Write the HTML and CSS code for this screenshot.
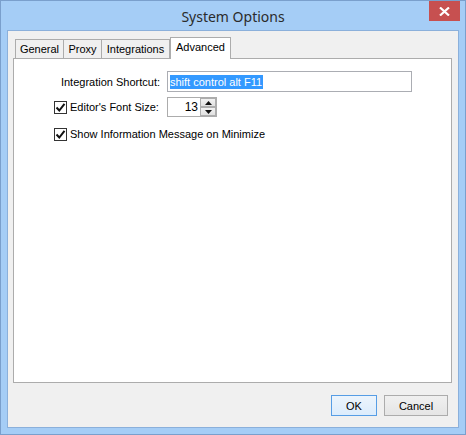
FILE: index.html
```html
<!DOCTYPE html>
<html>
<head>
<meta charset="utf-8">
<link rel="stylesheet" href="styles.css">
</head>
<body>
<div class="window">
  <div class="titlebar">
    <span class="title">System Options</span>
    <div class="close">
      <svg width="11" height="9" viewBox="0 0 11 9"><path d="M1 0.5 L10 8.5 M10 0.5 L1 8.5" stroke="#fff" stroke-width="2.2" fill="none"/></svg>
    </div>
  </div>
  <div class="client">
    <div class="tabs">
      <div class="tab t-general">General</div>
      <div class="tab t-proxy">Proxy</div>
      <div class="tab t-integ">Integrations</div>
      <div class="tab active">Advanced</div>
    </div>
    <div class="panel">
      <div class="row row1">
        <div class="lbl">Integration Shortcut:</div>
        <div class="field"><span class="sel">shift control alt F11</span></div>
      </div>
      <div class="row row2">
        <div class="check">
          <span class="box"><svg width="11" height="11" viewBox="0 0 11 11"><path d="M1.5 5.5 L4.3 8.5 L9.5 1.8" stroke="#111" stroke-width="2" fill="none"/></svg></span>
          <span>Editor's Font Size:</span>
        </div>
        <div class="spinner">
          <span class="num">13</span>
          <div class="spin-btns">
            <div class="sbtn"><svg width="7" height="4" viewBox="0 0 7 4"><path d="M0 4 L3.5 0 L7 4 Z" fill="#111"/></svg></div>
            <div class="sbtn"><svg width="7" height="4" viewBox="0 0 7 4"><path d="M0 0 L3.5 4 L7 0 Z" fill="#111"/></svg></div>
          </div>
        </div>
      </div>
      <div class="row row3">
        <div class="check">
          <span class="box"><svg width="11" height="11" viewBox="0 0 11 11"><path d="M1.5 5.5 L4.3 8.5 L9.5 1.8" stroke="#111" stroke-width="2" fill="none"/></svg></span>
          <span>Show Information Message on Minimize</span>
        </div>
      </div>
    </div>
    <div class="buttons">
      <div class="btn default">OK</div>
      <div class="btn cancel">Cancel</div>
    </div>
  </div>
</div>
</body>
</html>
```

FILE: styles.css
```css
html, body {
  margin: 0;
  padding: 0;
  background: #ffffff;
}
.window {
  position: relative;
  width: 466px;
  height: 435px;
  box-sizing: border-box;
  border: 1px solid #7a9fcc;
  background: #a5cdf6;
  display: flex;
  flex-direction: column;
  font-family: "Liberation Sans", Arial, sans-serif;
  font-size: 11px;
  color: #000;
}
.titlebar {
  height: 29px;
  display: flex;
  align-items: center;
  justify-content: center;
}
.title {
  font-family: "Noto Sans", "Open Sans", sans-serif;
  font-size: 14px;
  color: #2b2b2b;
  margin-top: 1px;
}
.close {
  position: absolute;
  top: 0;
  right: 5px;
  width: 31px;
  height: 20px;
  background: #c75050;
  display: flex;
  align-items: center;
  justify-content: center;
}
.client {
  flex: 1;
  margin: 0 6px 6px 6px;
  border: 1px solid #8bb0db;
  background: #f0f0f0;
  display: flex;
  flex-direction: column;
}
.tabs {
  display: flex;
  align-items: flex-end;
  margin-top: 6px;
  padding-left: 7px;
}
.tab {
  height: 19px;
  box-sizing: border-box;
  border: 1px solid #acacac;
  border-bottom: none;
  background: #f0f0f0;
  display: flex;
  align-items: center;
  justify-content: center;
  color: #000;
  margin-right: -1px;
}
.t-general { width: 49px; }
.t-proxy { width: 39px; }
.t-integ { width: 69px; }
.tab.active {
  position: relative;
  z-index: 1;
  width: 61px;
  height: 22px;
  margin-left: 1px;
  margin-bottom: -1px;
  background: #ffffff;
  padding-bottom: 3px;
}
.panel {
  height: 325px;
  box-sizing: border-box;
  margin: 0 6px 0 5px;
  border: 1px solid #acacac;
  background: #ffffff;
  padding-top: 12px;
  display: flex;
  flex-direction: column;
}
.row {
  display: flex;
  align-items: center;
}
.row1 { height: 21px; }
.row2 { height: 20px; margin-top: 5px; }
.row3 { height: 20px; margin-top: 7px; }
.lbl {
  width: 146px;
  text-align: right;
  box-sizing: border-box;
}
.field {
  margin-left: 7px;
  width: 245px;
  height: 21px;
  box-sizing: border-box;
  border: 1px solid #abadb3;
  background: #fff;
  display: flex;
  align-items: center;
  padding-left: 2px;
}
.sel {
  background: #3399ff;
  color: #fff;
  line-height: 14px;
  padding-right: 1px;
}
.check {
  display: flex;
  align-items: center;
  margin-left: 40px;
}
.row2 .check { width: 113px; }
.box {
  width: 13px;
  height: 13px;
  box-sizing: border-box;
  border: 1px solid #333;
  background: #fff;
  display: flex;
  align-items: center;
  justify-content: center;
  margin-right: 3px;
}
.spinner {
  width: 50px;
  height: 20px;
  box-sizing: border-box;
  border: 1px solid #acacac;
  background: #fff;
  display: flex;
  align-items: center;
  justify-content: flex-end;
}
.num {
  margin-right: 2px;
  font-size: 12px;
}
.spin-btns {
  display: flex;
  flex-direction: column;
  height: 18px;
  width: 16px;
}
.sbtn {
  flex: 1;
  box-sizing: border-box;
  border: 1px solid #adadad;
  background: linear-gradient(#f2f2f2, #e0e0e0);
  display: flex;
  align-items: center;
  justify-content: center;
}
.buttons {
  display: flex;
  justify-content: flex-end;
  gap: 7px;
  margin-top: 12px;
  padding-right: 10px;
}
.btn {
  height: 21px;
  box-sizing: border-box;
  border: 1px solid #acacac;
  background: linear-gradient(#f0f0f0, #e5e5e5);
  display: flex;
  align-items: center;
  justify-content: center;
}
.btn.default {
  width: 46px;
  border-color: #569de5;
  background: linear-gradient(#ecf4fc, #dcecfc);
}
.btn.cancel {
  width: 64px;
}
```
